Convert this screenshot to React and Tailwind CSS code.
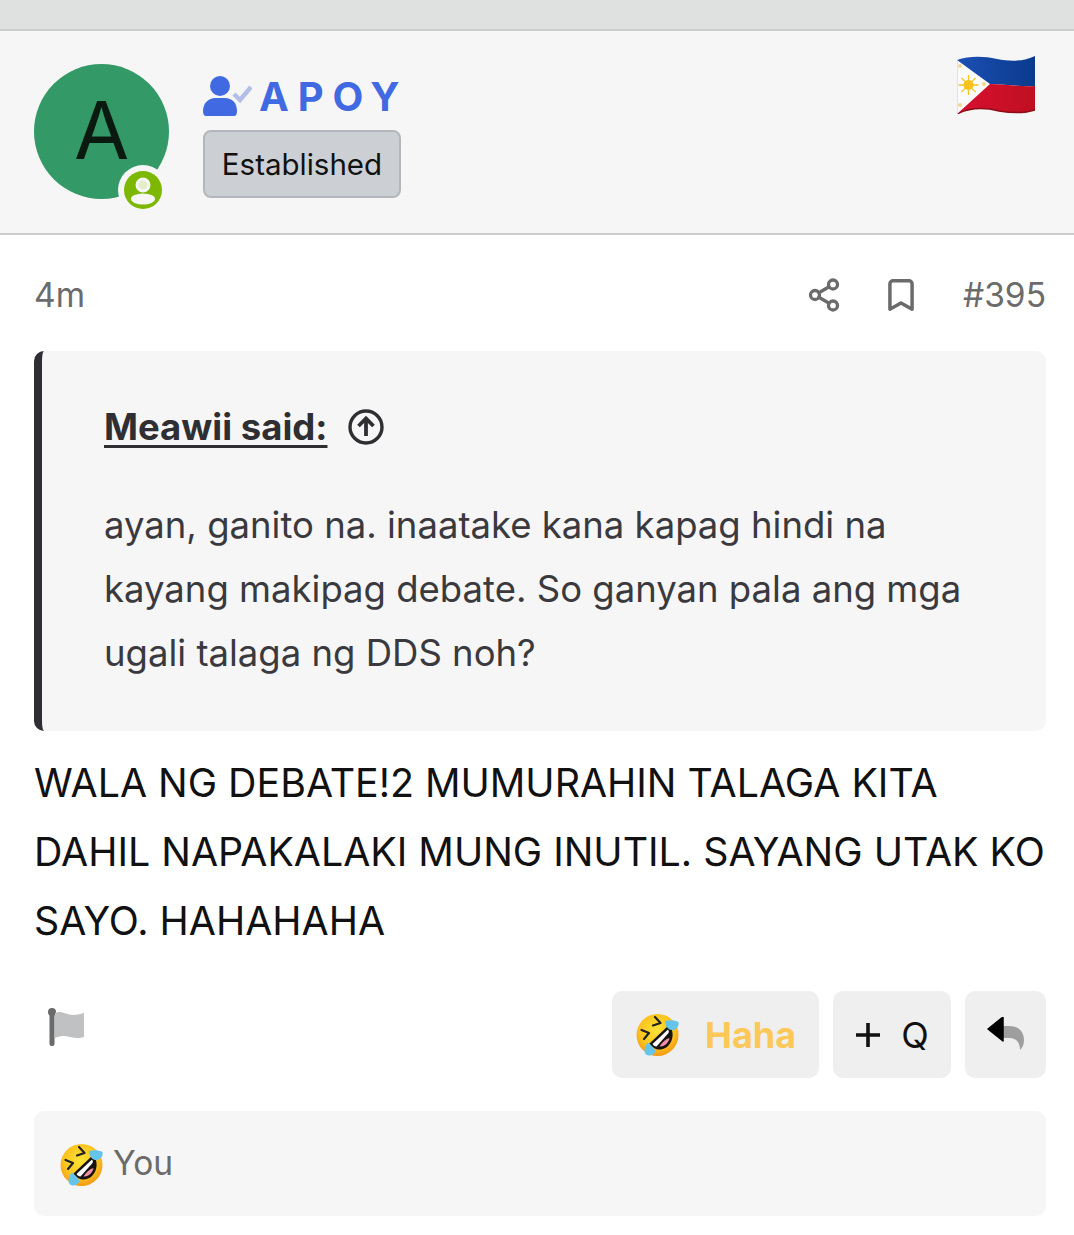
import React from 'react';
import { Share2, Bookmark } from 'lucide-react';

const Rofl = ({ id, className }) => (
  <svg viewBox="0 0 44 44" className={className}>
    <defs>
      <radialGradient id={id} cx="48%" cy="40%" r="60%">
        <stop offset="0%" stopColor="#fde336" />
        <stop offset="65%" stopColor="#fcc51f" />
        <stop offset="100%" stopColor="#f59a12" />
      </radialGradient>
    </defs>
    <circle cx="21.5" cy="22" r="21" fill={`url(#${id})`} />
    <path d="M13.5 30.5 L33 12 C38 17 38 27 32 33 C27 38 18 38 13.5 30.5Z" fill="#161310" />
    <path d="M16.5 31 L32 16.5 C33 18 33 19 32.5 20 L20.5 33.5 C18.5 33.5 17.5 32.5 16.5 31Z" fill="#fff" />
    <path d="M23.5 33.5 C26 29 30 26 33.5 25 C33 29 29 34 23.5 33.5Z" fill="#f08fa6" />
    <path d="M19 4 L24.5 10 L17 12.5" fill="none" stroke="#222" strokeWidth="2.2" strokeLinecap="round" strokeLinejoin="round" />
    <path d="M5.5 17 L13 20 L8 26" fill="none" stroke="#222" strokeWidth="2.2" strokeLinecap="round" strokeLinejoin="round" />
    <path d="M29 8 C33 6.5 39 7 42.5 9 C43.5 13 40 18 35 17 C31 16 29 12 29 8Z" fill="#64c4ec" />
    <path d="M12 29.5 C15 32 18 35 19.5 38 C18.5 42 13 44 10 41.5 C7 39 9 32 12 29.5Z" fill="#64c4ec" />
  </svg>
);

const PhFlag = () => (
  <svg viewBox="0 0 78 58" className="w-[78px] h-[58px]">
    <defs>
      <linearGradient id="phBlue" x1="0" y1="0" x2="1" y2="0">
        <stop offset="0%" stopColor="#1c50b4" />
        <stop offset="100%" stopColor="#093a8c" />
      </linearGradient>
      <linearGradient id="phRed" x1="0" y1="0" x2="1" y2="0">
        <stop offset="0%" stopColor="#d81030" />
        <stop offset="100%" stopColor="#c00f20" />
      </linearGradient>
    </defs>
    <path d="M0 4 C12 0 26 0 40 3 C55 6 68 5 78 0 L78 30 C62 31 48 28 33 28 L0 29Z" fill="url(#phBlue)" />
    <path d="M33 28 C48 28 62 31 78 30 L78 54 C66 58 54 57 42 55 C26 51 12 52 0 58 L0 29Z" fill="url(#phRed)" />
    <path d="M0 58 C12 52 26 51 42 55 C54 57 66 58 78 54" fill="none" stroke="#8c0c18" strokeWidth="1.5" />
    <path d="M0 4 L33 28 L0 58Z" fill="#fbfbfb" />
    <path d="M0 4 L0 58" stroke="#c9c9c9" strokeWidth="1" />
    <circle cx="11.5" cy="29" r="5" fill="#f6c21c" />
    <path d="M11.5 19 V39 M1.5 29 H21.5 M4.4 21.9 L18.6 36.1 M18.6 21.9 L4.4 36.1" stroke="#f6c21c" strokeWidth="1.3" />
    <circle cx="3" cy="10" r="2" fill="#f3d98a" />
    <circle cx="3" cy="49" r="2" fill="#f3d98a" />
    <circle cx="27" cy="28" r="2" fill="#f3d98a" />
  </svg>
);

const App = () => {
  return (
    <div className="w-[1074px] bg-white font-['Inter',sans-serif]">
      <div className="h-[31px] bg-[#dfe0e0] border-b-2 border-[#cdcdcd]" />

      <div className="h-[204px] bg-[#f6f6f7] border-b-2 border-[#cdcdcd] flex pl-[34px] pr-[39px] pt-[33px]">
        <div className="relative w-[135px] h-[135px] rounded-full bg-[#339966] flex items-center justify-center shrink-0">
          <span className="text-[80px] leading-none text-[#0a1a10] mt-[-4px]">A</span>
          <div className="absolute left-[84px] top-[101px] w-[50px] h-[50px] rounded-full bg-[#f6f6f7] flex items-center justify-center">
            <svg viewBox="0 0 38 38" className="w-[38px] h-[38px]">
              <circle cx="19" cy="19" r="19" fill="#7cb800" />
              <circle cx="19" cy="14" r="6" fill="#e4eec8" stroke="#f6f6f7" strokeWidth="3" />
              <ellipse cx="19" cy="28" rx="12" ry="5.5" fill="#f6f6f7" />
            </svg>
          </div>
        </div>

        <div className="ml-[34px] flex flex-col items-start">
          <div className="flex items-center h-[66px]">
            <svg viewBox="0 0 49 40" className="w-[49px] h-[40px] mt-[-3px]">
              <circle cx="17" cy="10" r="10" fill="#4169e1" />
              <path d="M0 35 C0 27 6 22 12 22 H22 C29 22 34 27 34 35 C34 38 33 40 31 40 H3 C1 40 0 38 0 35Z" fill="#4169e1" />
              <path d="M31 18 L37 24 L48 11" fill="none" stroke="#b4bfe8" strokeWidth="4.5" />
            </svg>
            <span className="ml-[7px] text-[40px] leading-none font-bold tracking-[0.22em] text-[#4169e1] whitespace-nowrap">APOY</span>
          </div>
          <div className="h-[68px] w-[198px] rounded-[8px] bg-[#ccd0d4] border-2 border-[#b3b6ba] flex items-center justify-center text-[29.5px] text-[#111]">
            Established
          </div>
        </div>

        <div className="ml-auto mt-[-8px]">
          <PhFlag />
        </div>
      </div>

      <div className="pl-[34px] pr-[28px]">
        <div className="flex items-center h-[116px] text-[33.5px] text-[#6b6b6b] pt-[4px]">
          <span>4m</span>
          <Share2 className="ml-auto mr-[-1px] w-[36px] h-[36px]" strokeWidth={2.2} />
          <Bookmark className="ml-[41px] w-[38px] h-[38px]" strokeWidth={2.2} />
          <span className="ml-[43px]">#395</span>
        </div>

        <div className="h-[380px] rounded-[10px] bg-[#f6f6f7] border-l-[8px] border-[#2f2f33] pl-[62px] pr-[60px] pt-[53px]">
          <div className="flex items-center text-[#2f2f33]">
            <span className="text-[36.5px] leading-[46px] font-bold underline decoration-[3px] underline-offset-[5px]">Meawii said:</span>
            <svg viewBox="0 0 36 36" className="ml-[21px] w-[36px] h-[36px]" fill="none" stroke="currentColor" strokeWidth="3.4">
              <circle cx="18" cy="18" r="16" />
              <path d="M18 27 V10 M10.5 17 L18 9.5 L25.5 17" strokeWidth="3.8" />
            </svg>
          </div>
          <p className="mt-[43px] text-[36.5px] leading-[64px] text-[#3a3a3e]">
            ayan, ganito na. inaatake kana kapag hindi na kayang makipag debate. So ganyan pala ang mga ugali talaga ng DDS noh?
          </p>
        </div>

        <p className="mt-[17px] text-[39.33px] leading-[69px] text-[#111] whitespace-nowrap">
          WALA NG DEBATE!2 MUMURAHIN TALAGA KITA<br />
          DAHIL NAPAKALAKI MUNG INUTIL. SAYANG UTAK KO<br />
          SAYO. HAHAHAHA
        </p>

        <div className="mt-[36px] flex items-start">
          <svg viewBox="0 0 36 38" className="ml-[14px] mt-[17px] w-[36px] h-[38px]">
            <rect x="1.5" y="3" width="5" height="35" rx="2" fill="#6b6b6b" />
            <circle cx="4" cy="4" r="4" fill="#6b6b6b" />
            <path d="M7 5 C14 2 18 7 25 7 C29 7 32 6 36 5 V29 C28 32 22 28 15 28 C12 28 9 29 7 30Z" fill="#bfc1c3" />
          </svg>
          <div className="ml-auto flex gap-[14px]">
            <div className="h-[87px] w-[207px] rounded-[10px] bg-[#efefef] flex items-center pl-[24px]">
              <Rofl id="roflHaha" className="w-[44px] h-[44px]" />
              <span className="ml-[25px] text-[36px] font-bold text-[#fcc958]">Haha</span>
            </div>
            <div className="h-[87px] w-[118px] rounded-[10px] bg-[#efefef] flex items-center justify-center gap-[20px] text-[36px] text-[#111]">
              <svg viewBox="0 0 26 26" className="w-[26px] h-[26px]" stroke="#111" strokeWidth="3.6">
                <path d="M13 1 V25 M1 13 H25" />
              </svg>
              <span>Q</span>
            </div>
            <div className="h-[87px] w-[81px] rounded-[10px] bg-[#efefef] flex items-center justify-center">
              <svg viewBox="0 0 38 34" className="w-[38px] h-[34px] mt-[-2px]">
                <path d="M16 9 H22 C31 9 37 14 37 23 C37 28 35 31 33 33 C33 25 29 21 22 21 H16Z" fill="#9e9e9e" />
                <path d="M16 0 V24 L1 12Z" fill="#000" stroke="#000" strokeWidth="1.5" strokeLinejoin="round" />
              </svg>
            </div>
          </div>
        </div>

        <div className="mt-[33px] h-[105px] rounded-[10px] bg-[#f6f6f7] flex items-center pl-[26px]">
          <Rofl id="roflYou" className="w-[44px] h-[44px] mt-[2px]" />
          <span className="ml-[9px] text-[33.5px] text-[#6b6b6b]">You</span>
        </div>
      </div>
      <div className="h-[19px]" />
    </div>
  );
};

export default App;
